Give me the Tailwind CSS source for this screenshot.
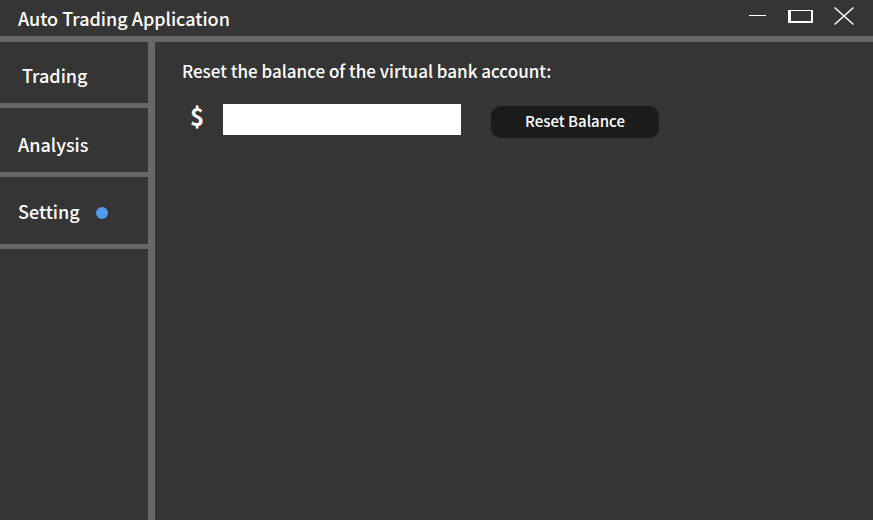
<!DOCTYPE html>
<html lang="en">
<head>
<meta charset="utf-8">
<meta name="viewport" content="width=device-width, initial-scale=1">
<title>Auto Trading Application</title>
<script src="https://cdn.jsdelivr.net/npm/@tailwindcss/browser@4"></script>
</head>
<body class="flex min-h-screen flex-col bg-[#353535] font-['Noto_Sans_CJK_SC','Open_Sans',sans-serif] font-medium text-white">
  <header class="flex items-center justify-between border-b-6 border-[#676767] pr-4 pl-[18px]">
    <h1 class="text-[18px] leading-9">Auto Trading Application</h1>
    <div class="flex items-center gap-5 pb-1">
      <button type="button" aria-label="Minimize">
        <svg class="block h-5 w-5" viewBox="0 0 20 20" fill="#fff" shape-rendering="crispEdges"><path d="M1 9h17v1H1z"/></svg>
      </button>
      <button type="button" aria-label="Maximize">
        <svg class="block h-5 w-[25px]" viewBox="0 0 25 20" fill="#fff" fill-rule="evenodd" shape-rendering="crispEdges"><path d="M0 4h25v13H0zM3 5v10h20V5z"/></svg>
      </button>
      <button type="button" aria-label="Close">
        <svg class="block h-5 w-6" viewBox="0 0 24 20" fill="none" stroke="#fff" stroke-width="1.5"><path d="M1.5 1.5 20.5 18.5M20.5 1.5 1.5 18.5"/></svg>
      </button>
    </div>
  </header>
  <div class="flex grow">
    <nav class="w-[155px] shrink-0 border-r-7 border-[#676767] text-[18px] leading-7">
      <a href="#trading" class="flex h-[66px] items-center border-b-5 border-[#676767] pt-1 pl-[22px]">Trading</a>
      <a href="#analysis" class="flex h-[69px] items-center border-b-5 border-[#676767] pt-2 pl-[18px]">Analysis</a>
      <a href="#setting" aria-current="page" class="flex h-[72px] items-center gap-4 border-b-5 border-[#676767] pl-[18px]">Setting<span class="mt-1 size-3 rounded-full bg-[#5599ec]"></span></a>
    </nav>
    <main class="grow pt-[15px] pl-[27px]">
      <label for="balance" class="block text-[17px] leading-7">Reset the balance of the virtual bank account:</label>
      <form class="flex items-start pt-4">
        <span class="w-[41px] pl-2 text-[24px] leading-[30px] font-bold">$</span>
        <input id="balance" type="text" inputmode="decimal" class="mt-[3px] h-[31px] w-[238px] bg-white px-2 text-[17px] text-black outline-none">
        <button type="button" class="mt-[5px] ml-[30px] h-8 w-[168px] rounded-[10px] bg-[#1b1b1b] pb-[2px] text-[15px] leading-7">Reset Balance</button>
      </form>
    </main>
  </div>
</body>
</html>
